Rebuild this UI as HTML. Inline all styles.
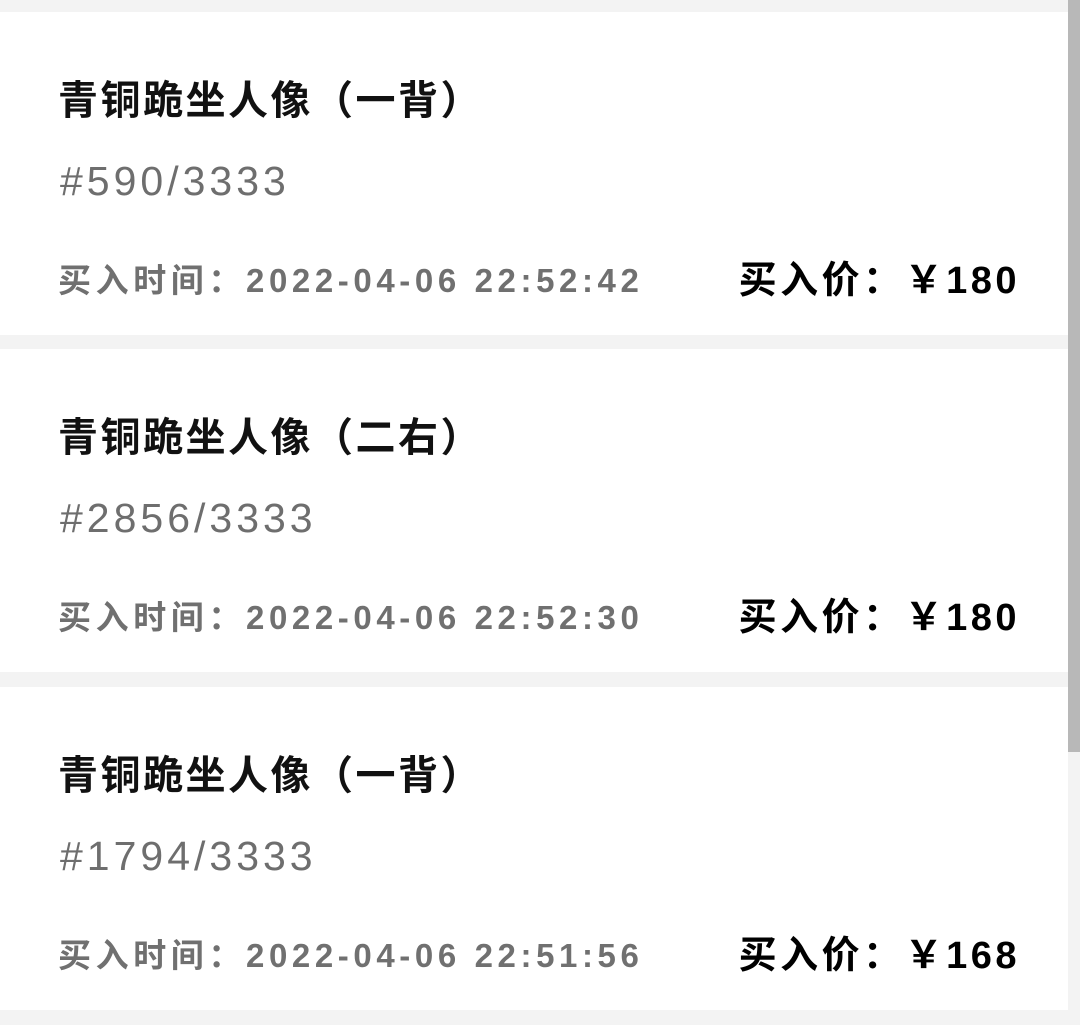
<!DOCTYPE html>
<html><head><meta charset="utf-8"><style>
html,body{margin:0;padding:0;}
body{width:1080px;height:1025px;background:#f3f3f3;position:relative;overflow:hidden;font-family:"Liberation Sans","Noto Sans CJK SC",sans-serif;}
.card{position:absolute;left:0;width:1068px;height:323px;background:#fff;}
.t{position:absolute;left:58px;top:64px;font-size:40px;font-weight:bold;color:#111;line-height:50px;letter-spacing:2.5px;}
.n{position:absolute;left:60px;top:144px;font-size:41px;color:#6e6e6e;line-height:50px;letter-spacing:4px;}
.d{position:absolute;left:58px;top:249px;font-size:33px;color:#707070;line-height:40px;letter-spacing:4.6px;font-weight:bold;}
.p{position:absolute;right:48px;top:245px;font-size:38px;color:#000;line-height:48px;font-weight:bold;letter-spacing:3.5px;}
.sb{position:absolute;right:0;top:0;width:12px;height:752px;background:#b8b8b8;}
</style></head><body>
<div class="card" style="top:12px">
<div class="t">青铜跪坐人像（一背）</div>
<div class="n">#590/3333</div>
<div class="d">买入时间：2022-04-06 22:52:42</div>
<div class="p">买入价：￥180</div>
</div>
<div class="card" style="top:349px">
<div class="t">青铜跪坐人像（二右）</div>
<div class="n">#2856/3333</div>
<div class="d">买入时间：2022-04-06 22:52:30</div>
<div class="p">买入价：￥180</div>
</div>
<div class="card" style="top:687px">
<div class="t">青铜跪坐人像（一背）</div>
<div class="n">#1794/3333</div>
<div class="d">买入时间：2022-04-06 22:51:56</div>
<div class="p">买入价：￥168</div>
</div>
<div class="sb"></div>
</body></html>
